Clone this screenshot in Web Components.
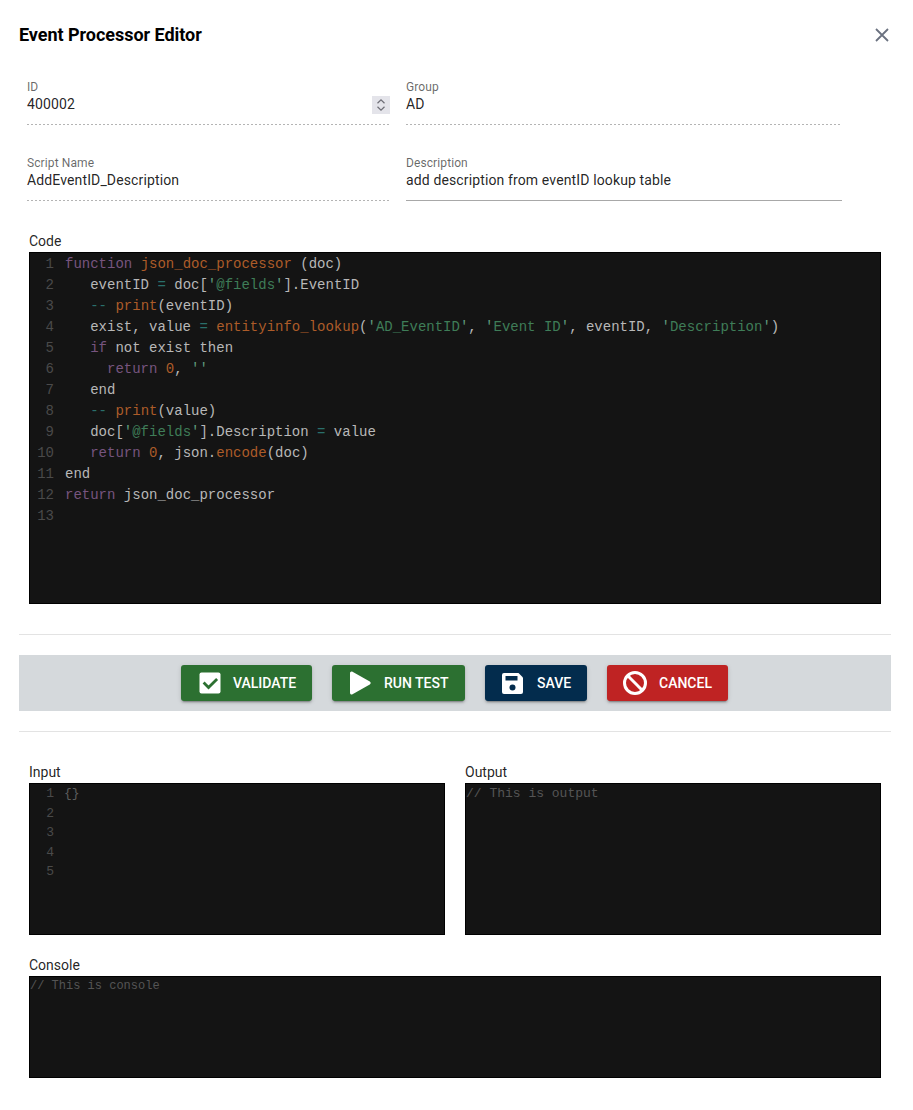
<!DOCTYPE html>
<html>
<head>
<meta charset="utf-8">
<title>Event Processor Editor</title>
<style>
  html, body { margin: 0; background: #fff; }
  body { font-family: Roboto, "Liberation Sans", sans-serif; color: #000; }
</style>
</head>
<body>
<ep-dialog heading="Event Processor Editor">
  <ep-form-row>
    <ep-field label="ID" value="400002" dotted spinner></ep-field>
    <ep-field label="Group" value="AD" dotted></ep-field>
  </ep-form-row>
  <ep-form-row>
    <ep-field label="Script Name" value="AddEventID_Description" dotted></ep-field>
    <ep-field label="Description" value="add description from eventID lookup table"></ep-field>
  </ep-form-row>

  <ep-panel label="Code" style="margin-top:32px">
    <ep-editor height="352" size="14" gutter>function json_doc_processor (doc)
   eventID = doc['@fields'].EventID
   -- print(eventID)
   exist, value = entityinfo_lookup('AD_EventID', 'Event ID', eventID, 'Description')
   if not exist then
     return 0, ''
   end
   -- print(value)
   doc['@fields'].Description = value
   return 0, json.encode(doc)
end
return json_doc_processor
</ep-editor>
  </ep-panel>

  <ep-action-bar>
    <ep-button color="#2c7031" width="131" lead="18" gap="12">
      <svg slot="icon" width="22" height="22" viewBox="0 0 22 22"><rect x="0.5" y="0.5" width="21" height="21" rx="2" fill="#fff"/><path d="M4.6 10.6l4.9 4.9 8.6-8.6" fill="none" stroke="#2c7031" stroke-width="2.8"/></svg>
      Validate
    </ep-button>
    <ep-button color="#2c7031" width="133" lead="18" gap="12">
      <svg slot="icon" width="22" height="24" viewBox="0 0 22 24"><path d="M0 2.2C0 .8 1.3 0 2.5.7l17.3 9.8c1.2.7 1.2 2.3 0 3L2.5 23.3C1.3 24 0 23.2 0 21.8z" fill="#fff"/></svg>
      Run Test
    </ep-button>
    <ep-button color="#032c4d" width="102" lead="17" gap="14">
      <svg slot="icon" width="21" height="21" viewBox="0 0 21 21"><path d="M2 0h14.5L21 4.5V19a2 2 0 0 1-2 2H2a2 2 0 0 1-2-2V2a2 2 0 0 1 2-2z" fill="#fff"/><rect x="3.5" y="3" width="12" height="4.5" fill="#032c4d"/><circle cx="10.5" cy="14.5" r="3" fill="#032c4d"/></svg>
      Save
    </ep-button>
    <ep-button color="#bf2323" width="121" lead="16" gap="12">
      <svg slot="icon" width="24" height="24" viewBox="0 0 24 24"><circle cx="12" cy="12" r="10.5" fill="none" stroke="#fff" stroke-width="3"/><path d="M4.8 4.8l14.4 14.4" stroke="#fff" stroke-width="3"/></svg>
      Cancel
    </ep-button>
  </ep-action-bar>

  <ep-io-grid>
    <ep-panel label="Input">
      <ep-editor height="152" size="13" gutter dim>{}



</ep-editor>
    </ep-panel>
    <ep-panel label="Output">
      <ep-editor height="152" size="13" placeholder>// This is output</ep-editor>
    </ep-panel>
  </ep-io-grid>

  <ep-panel label="Console" style="margin-top:22px">
    <ep-editor height="102" size="12" placeholder>// This is console</ep-editor>
  </ep-panel>
</ep-dialog>

<script>
class EpDialog extends HTMLElement {
  constructor() {
    super();
    this.attachShadow({ mode: 'open' });
  }
  connectedCallback() {
    this.shadowRoot.innerHTML = `
      <style>
        :host { display: block; width: 913px; height: 1110px; box-sizing: border-box; padding: 0 22px 0 19px; overflow: hidden; }
        .head { display: flex; align-items: center; justify-content: space-between; height: 70px; }
        h2 { margin: 0; font: 700 18px/24px Roboto, "Liberation Sans", sans-serif; letter-spacing: -.04px; }
        svg { display: block; margin-right: 2px; }
      </style>
      <div class="head">
        <h2>${this.getAttribute('heading') || ''}</h2>
        <svg width="14" height="14" viewBox="0 0 14 14"><path d="M1 1l12 12M13 1L1 13" stroke="#6b7280" stroke-width="1.8" fill="none"/></svg>
      </div>
      <slot></slot>`;
  }
}

class EpFormRow extends HTMLElement {
  constructor() {
    super();
    this.attachShadow({ mode: 'open' });
    this.shadowRoot.innerHTML = `
      <style>
        :host { display: grid; grid-template-columns: 363px 436px; column-gap: 16px; margin: 10px 0 31px 8px; }
        :host(:last-of-type) { margin-bottom: 0; }
      </style>
      <slot></slot>`;
  }
}

class EpField extends HTMLElement {
  constructor() {
    super();
    this.attachShadow({ mode: 'open' });
  }
  connectedCallback() {
    const line = this.hasAttribute('dotted')
      ? 'repeating-linear-gradient(90deg, #b4b4b4 0 2px, transparent 2px 4px)'
      : '#a8a8a8';
    const spinner = this.hasAttribute('spinner') ? `
      <svg width="18" height="18" viewBox="0 0 18 18"><rect width="18" height="18" fill="#e4e4ea"/><path d="M5.5 7.2L9 3.8l3.5 3.4M5.5 10.8L9 14.2l3.5-3.4" fill="none" stroke="#6e6e76" stroke-width="1.2"/></svg>` : '';
    this.shadowRoot.innerHTML = `
      <style>
        :host { display: block; height: 45px; box-sizing: border-box; font-family: Roboto, "Liberation Sans", sans-serif; }
        label { display: block; font-size: 12px; line-height: 14px; letter-spacing: .1px; color: rgba(0,0,0,.6); }
        .value { display: flex; align-items: center; justify-content: space-between; height: 18px; margin-top: 1px; font-size: 14px; letter-spacing: .13px; color: rgba(0,0,0,.87); }
        .value svg { margin-top: 2px; }
        .line { margin-top: 11px; height: 1px; background: ${line}; }
      </style>
      <label>${this.getAttribute('label')}</label>
      <div class="value"><span>${this.getAttribute('value')}</span>${spinner}</div>
      <div class="line"></div>`;
  }
}

class EpPanel extends HTMLElement {
  constructor() {
    super();
    this.attachShadow({ mode: 'open' });
  }
  connectedCallback() {
    this.shadowRoot.innerHTML = `
      <style>
        :host { display: block; margin-left: 10px; margin-right: 10px; font-family: Roboto, "Liberation Sans", sans-serif; }
        .label { font-size: 14px; line-height: 16px; height: 19px; color: rgba(0,0,0,.87); }
      </style>
      <div class="label">${this.getAttribute('label')}</div>
      <slot></slot>`;
  }
}

// small lua highlighter, enough for what the editor shows
class EpEditor extends HTMLElement {
  constructor() {
    super();
    this.attachShadow({ mode: 'open' });
  }
  _highlight(line) {
    const re = /('[^']*')|(--)|(=)|\b(function|if|return)\b|\b(\d+)\b|([A-Za-z_]\w*)(?=\s*\()|([<>&])/g;
    return line.replace(re, (m, str, dash, eq, kw, num, fn, esc) => {
      if (str === "''") return `<i class="q">${str}</i>`;
      if (str) return `<i class="q">'</i><i class="s">${str.slice(1, -1)}</i><i class="q">'</i>`;
      if (dash || eq) return `<i class="o">${m}</i>`;
      if (kw) return `<i class="k">${m}</i>`;
      if (num || fn) return `<i class="f">${m}</i>`;
      return '&#' + m.charCodeAt(0) + ';';
    });
  }
  connectedCallback() {
    const size = +this.getAttribute('size') || 13;
    const gutter = this.hasAttribute('gutter');
    const lines = this.textContent.split('\n');
    const rows = lines.map((text, i) => `
      <div class="row">${gutter ? `<span class="num">${i + 1}</span>` : ''}<span class="code">${this.hasAttribute('placeholder') ? text : this._highlight(text)}</span></div>`).join('');
    this.shadowRoot.innerHTML = `
      <style>
        :host { display: block; box-sizing: border-box; height: ${this.getAttribute('height')}px; padding-top: ${size === 14 ? 1 : 0}px; background: #141414; border: 1px solid #000; overflow: hidden; color: ${this.hasAttribute('dim') ? '#5c5c5c' : '#b8b8b8'}; font: ${size}px/${size * 1.5}px "Liberation Mono", monospace; }
        :host([placeholder]) { color: #555; }
        .row { display: flex; height: ${size * 1.5}px; white-space: pre; }
        .num { flex: none; width: 24px; margin-right: ${size === 14 ? 11 : 10}px; text-align: right; color: #4a4a4a; }
        i { font-style: normal; }
        .k { color: #77547f; }
        .f { color: #ad5c29; }
        .s { color: #3f7d58; }
        .q { color: #5f9a7c; }
        .o { color: #2a6f6b; }
      </style>
      ${rows}`;
  }
}

class EpButton extends HTMLElement {
  constructor() {
    super();
    this.attachShadow({ mode: 'open' });
  }
  connectedCallback() {
    const g = n => this.getAttribute(n);
    this.shadowRoot.innerHTML = `
      <style>
        :host { display: inline-flex; flex: none; align-items: center; width: ${g('width')}px; height: 36px; box-sizing: border-box; padding-left: ${g('lead')}px; gap: ${g('gap')}px; border-radius: 3px; background: ${g('color')}; color: #fff; font: 500 14px/16px Roboto, "Liberation Sans", sans-serif; text-transform: uppercase; box-shadow: 0 3px 1px -2px rgba(0,0,0,.2), 0 2px 2px 0 rgba(0,0,0,.14), 0 1px 5px 0 rgba(0,0,0,.12); }
        ::slotted(svg) { display: block; flex: none; }
      </style>
      <slot name="icon"></slot><slot></slot>`;
  }
}

class EpActionBar extends HTMLElement {
  constructor() {
    super();
    this.attachShadow({ mode: 'open' });
    this.shadowRoot.innerHTML = `
      <style>
        :host { display: block; margin-top: 30px; border-top: 1px solid #e3e3e3; border-bottom: 1px solid #e3e3e3; padding: 20px 0; }
        .bar { display: flex; justify-content: center; align-items: center; gap: 20px; height: 56px; padding-right: 1px; background: #d5d9dc; }
      </style>
      <div class="bar"><slot></slot></div>`;
  }
}

class EpIoGrid extends HTMLElement {
  constructor() {
    super();
    this.attachShadow({ mode: 'open' });
    this.shadowRoot.innerHTML = `
      <style>
        :host { display: grid; grid-template-columns: 436px 436px; margin-top: 32px; }
      </style>
      <slot></slot>`;
  }
}

customElements.define('ep-dialog', EpDialog);
customElements.define('ep-form-row', EpFormRow);
customElements.define('ep-field', EpField);
customElements.define('ep-panel', EpPanel);
customElements.define('ep-editor', EpEditor);
customElements.define('ep-button', EpButton);
customElements.define('ep-action-bar', EpActionBar);
customElements.define('ep-io-grid', EpIoGrid);
</script>
</body>
</html>
